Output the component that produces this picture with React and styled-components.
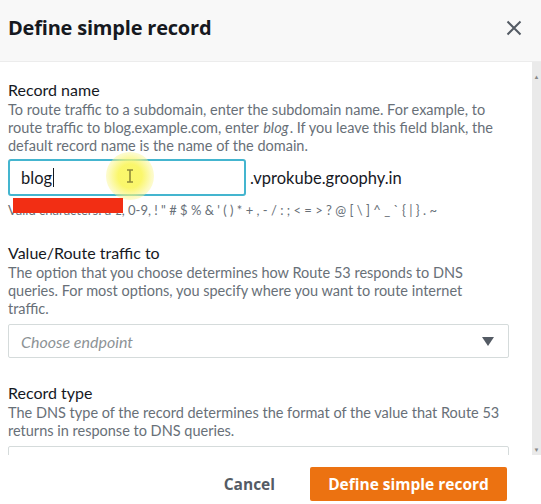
import React from 'react'
import styled, { createGlobalStyle } from 'styled-components'

const Global = createGlobalStyle`
  html, body { margin: 0; padding: 0; background: #ffffff; }
  body { font-family: Lato, "Liberation Sans", sans-serif; }
`

const Modal = styled.div`
  width: 541px;
  height: 504px;
  display: flex;
  flex-direction: column;
  background: #ffffff;
  overflow: hidden;
`

const Header = styled.div`
  height: 62px;
  flex: none;
  display: flex;
  align-items: center;
  justify-content: space-between;
  padding: 0 19px 6px 8px;
  box-sizing: border-box;
  background: #f8f8f8;
  border-bottom: 1px solid #ececec;
`

const Title = styled.h2`
  margin: 0;
  font-family: "Open Sans", sans-serif;
  font-size: 20px;
  font-weight: 700;
  color: #16191f;
  letter-spacing: -0.2px;
`

const Close = styled.button`
  border: none;
  background: none;
  padding: 0;
  display: flex;
`

const Body = styled.div`
  flex: 1;
  display: flex;
  overflow: hidden;
`

const Content = styled.div`
  flex: 1;
  padding: 18px 0 0 8px;
  overflow: hidden;
`

const Scrollbar = styled.div`
  width: 9px;
  flex: none;
  background: #eaeaea;
  display: flex;
  flex-direction: column;
  justify-content: space-between;
  align-items: center;
  padding: 12px 0 2px;
  box-sizing: border-box;
  font-size: 6px;
  color: #888;
  line-height: 1;
`

const Field = styled.div`
  margin-bottom: ${p => p.$gap || 24}px;
`

const Label = styled.div`
  font-size: 16px;
  color: #16191f;
  line-height: 20px;
  margin-bottom: 1px;
`

const Desc = styled.div`
  font-size: 14.5px;
  line-height: 18px;
  color: #687078;
  padding-right: 30px;
`

const Em = styled.em`
  font-style: italic;
  padding: 0 1px;
`

const InputRow = styled.div`
  display: flex;
  align-items: center;
  margin-top: 4px;
`

const TextInput = styled.div`
  width: 238px;
  height: 37px;
  box-sizing: border-box;
  border: 2px solid #44b5cf;
  border-radius: 3px;
  display: flex;
  align-items: center;
  padding-left: 11px;
  font-size: 16.5px;
  color: #16191f;
  position: relative;
`

const Caret = styled.span`
  display: inline-block;
  width: 1px;
  height: 19px;
  background: #16191f;
  margin-left: 1px;
`

const Highlight = styled.div`
  position: absolute;
  left: 96px;
  top: -9px;
  width: 48px;
  height: 48px;
  border-radius: 50%;
  background: radial-gradient(circle, rgba(250, 246, 100, 0.95) 35%, rgba(250, 246, 140, 0.5) 65%, rgba(255, 255, 255, 0) 100%);
  display: flex;
  align-items: center;
  justify-content: center;
`

const Suffix = styled.span`
  margin-left: 4px;
  font-size: 16.5px;
  color: #16191f;
`

const Hint = styled.div`
  font-size: 13px;
  color: #687078;
  margin-top: 5px;
  line-height: 18px;
  position: relative;
  white-space: nowrap;
`

const Redact = styled.span`
  position: absolute;
  left: 5px;
  top: -3px;
  width: 110px;
  height: 15px;
  background: #f22e14;
`

const Select = styled.div`
  margin-top: 6px;
  width: 501px;
  height: 34px;
  box-sizing: border-box;
  border: 1px solid #d5dbdb;
  border-radius: 2px;
  display: flex;
  align-items: center;
  justify-content: space-between;
  padding: 0 14px 0 12px;
  font-size: 16px;
  font-style: italic;
  color: #8d9396;
`

const Arrow = styled.span`
  width: 0;
  height: 0;
  border-left: 6px solid transparent;
  border-right: 6px solid transparent;
  border-top: 9px solid #545b64;
`

const Footer = styled.div`
  height: 49px;
  flex: none;
  display: flex;
  justify-content: flex-end;
  align-items: flex-start;
  padding: 12px 34px 0 0;
  box-sizing: border-box;
  gap: 35px;
`

const Button = styled.button`
  height: 34px;
  border: none;
  border-radius: 2px;
  font-family: "Open Sans", sans-serif;
  font-size: 15.5px;
  font-weight: 700;
  white-space: nowrap;
  padding: 0;
  background: ${p => (p.$primary ? '#ec7211' : 'transparent')};
  color: ${p => (p.$primary ? '#ffffff' : '#545b64')};
  width: ${p => (p.$primary ? '197px' : 'auto')};
`

const App = () => (
  <Modal>
    <Global />
    <Header>
      <Title>Define simple record</Title>
      <Close>
        <svg width="16" height="16" viewBox="0 0 16 16">
          <path d="M1.5 1.5L14.5 14.5M14.5 1.5L1.5 14.5" stroke="#545b64" strokeWidth="2" />
        </svg>
      </Close>
    </Header>
    <Body>
      <Content>
        <Field $gap={24}>
          <Label>Record name</Label>
          <Desc>
            To route traffic to a subdomain, enter the subdomain name. For example, to route traffic to
            blog.example.com, enter <Em>blog</Em>. If you leave this field blank, the default record name is
            the name of the domain.
          </Desc>
          <InputRow>
            <TextInput>
              blog<Caret />
              <Highlight>
                <svg width="8" height="14" viewBox="0 0 8 14">
                  <path d="M1 1H7M4 1V13M1 13H7" stroke="#8f8a3a" strokeWidth="1.6" fill="none" />
                </svg>
              </Highlight>
            </TextInput>
            <Suffix>.vprokube.groophy.in</Suffix>
          </InputRow>
          <Hint>
            Valid characters: a-z, 0-9, ! " # $ % &amp; ' ( ) * + , - / : ; &lt; = &gt; ? @ [ \ ] ^ _ ` {'{'} | {'}'} . ~
            <Redact />
          </Hint>
        </Field>
        <Field $gap={25}>
          <Label>Value/Route traffic to</Label>
          <Desc>
            The option that you choose determines how Route 53 responds to DNS queries. For most options, you
            specify where you want to route internet traffic.
          </Desc>
          <Select>
            Choose endpoint
            <Arrow />
          </Select>
        </Field>
        <Field>
          <Label>Record type</Label>
          <Desc>
            The DNS type of the record determines the format of the value that Route 53 returns in response to
            DNS queries.
          </Desc>
          <Select />
        </Field>
      </Content>
      <Scrollbar>
        <span>▲</span>
        <span>▼</span>
      </Scrollbar>
    </Body>
    <Footer>
      <Button>Cancel</Button>
      <Button $primary>Define simple record</Button>
    </Footer>
  </Modal>
)

export default App
